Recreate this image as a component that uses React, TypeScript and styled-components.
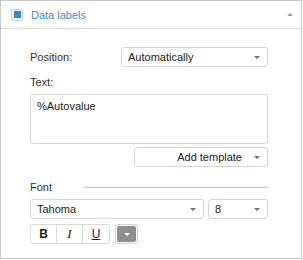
import React from "react";
import styled, { createGlobalStyle } from "styled-components";

const Global = createGlobalStyle`
  html, body { margin: 0; padding: 0; background: #fff; }
  body { font-family: "Liberation Sans", Arial, sans-serif; font-size: 11px; color: #333; }
  * { box-sizing: border-box; }
`;

const Panel = styled.div`
  width: 302px;
  height: 259px;
  border: 1px solid #c8c8c8;
  background: #fff;
  display: flex;
  flex-direction: column;
`;

const Header = styled.div`
  height: 28px;
  flex: none;
  border-bottom: 1px solid #dcdcdc;
  display: flex;
  align-items: center;
  padding: 0 0 0 10px;
`;

const Check = styled.span`
  width: 12px;
  height: 12px;
  border: 1px solid #cfcfcf;
  border-radius: 2px;
  display: flex;
  align-items: center;
  justify-content: center;
  margin-right: 8px;
`;

const CheckMark = styled.span`
  width: 7px;
  height: 7px;
  background: #2b8bd6;
`;

const Title = styled.span`
  color: #3a8ed2;
  font-size: 11px;
  flex: 1;
`;

const Collapse = styled.span`
  width: 0;
  height: 0;
  border-left: 3px solid transparent;
  border-right: 3px solid transparent;
  border-bottom: 3px solid #9a9a9a;
  margin-right: 8px;
`;

const Body = styled.div`
  padding: 18px 33px 0 29px;
  display: flex;
  flex-direction: column;
`;

const Row = styled.div<{ $mt?: number }>`
  display: flex;
  align-items: center;
  margin-top: ${(p) => p.$mt ?? 0}px;
`;

const Label = styled.div<{ $w?: number }>`
  width: ${(p) => (p.$w ? `${p.$w}px` : "auto")};
  flex: none;
  color: #333;
  line-height: 14px;
`;

const Select = styled.div<{ $w: number }>`
  width: ${(p) => p.$w}px;
  height: 20px;
  border: 1px solid #d6d6d6;
  border-radius: 3px;
  display: flex;
  align-items: center;
  padding: 0 7px 0 6px;
  color: #222;
  background: #fff;
`;

const SelectText = styled.span<{ $align?: string }>`
  flex: 1;
  text-align: ${(p) => p.$align ?? "left"};
  padding-right: ${(p) => (p.$align === "right" ? "12px" : "0")};
`;

const Arrow = styled.span<{ $color?: string }>`
  width: 0;
  height: 0;
  border-left: 3px solid transparent;
  border-right: 3px solid transparent;
  border-top: 3px solid ${(p) => p.$color ?? "#707070"};
`;

const TextArea = styled.div`
  margin-top: 5px;
  height: 50px;
  border: 1px solid #d6d6d6;
  border-radius: 3px;
  padding: 4px 6px;
  color: #222;
  line-height: 14px;
`;

const RightAlign = styled.div`
  display: flex;
  justify-content: flex-end;
  margin-top: 3px;
`;

const Line = styled.div`
  flex: 1;
  height: 1px;
  background: #c4c4c4;
`;

const Gap = styled.div<{ $w: number }>`
  width: ${(p) => p.$w}px;
  flex: none;
`;

const Group = styled.div`
  display: flex;
  height: 20px;
  border: 1px solid #dadada;
  border-radius: 3px;
  overflow: hidden;
`;

const StyleBtn = styled.div<{ $last?: boolean }>`
  width: 26px;
  height: 100%;
  display: flex;
  align-items: center;
  justify-content: center;
  border-right: ${(p) => (p.$last ? "none" : "1px solid #dadada")};
  color: #222;
  font-size: 12px;
`;

const Bold = styled.span`
  font-weight: bold;
  font-family: "Liberation Sans", Arial, sans-serif;
`;

const Ital = styled.span`
  font-style: italic;
  font-family: "Liberation Serif", "Times New Roman", serif;
  font-size: 13px;
`;

const Under = styled.span`
  text-decoration: underline;
`;

const ColorBtn = styled.div`
  width: 23px;
  height: 20px;
  margin-left: 5px;
  border: 1px solid #d0d0d0;
  border-radius: 3px;
  padding: 1px;
  display: flex;
`;

const ColorFill = styled.div`
  flex: 1;
  background: #8f8f8f;
  border-radius: 2px;
  display: flex;
  align-items: center;
  justify-content: flex-end;
  padding-right: 6px;
`;

export default function App() {
  return (
    <>
      <Global />
      <Panel>
        <Header>
          <Check>
            <CheckMark />
          </Check>
          <Title>Data labels</Title>
          <Collapse />
        </Header>
        <Body>
          <Row>
            <Label $w={91}>Position:</Label>
            <Select $w={148}>
              <SelectText>Automatically</SelectText>
              <Arrow />
            </Select>
          </Row>
          <Label style={{ marginTop: 8 }}>Text:</Label>
          <TextArea>%Autovalue</TextArea>
          <RightAlign>
            <Select $w={134}>
              <SelectText $align="right">Add template</SelectText>
              <Arrow />
            </Select>
          </RightAlign>
          <Row $mt={10} style={{ height: 20 }}>
            <Label $w={54}>Font</Label>
            <Line />
          </Row>
          <Row $mt={2}>
            <Select $w={174}>
              <SelectText>Tahoma</SelectText>
              <Arrow />
            </Select>
            <Gap $w={4} />
            <Select $w={60}>
              <SelectText>8</SelectText>
              <Arrow />
            </Select>
          </Row>
          <Row $mt={5}>
            <Group>
              <StyleBtn>
                <Bold>B</Bold>
              </StyleBtn>
              <StyleBtn>
                <Ital>I</Ital>
              </StyleBtn>
              <StyleBtn $last>
                <Under>U</Under>
              </StyleBtn>
            </Group>
            <ColorBtn>
              <ColorFill>
                <Arrow $color="#fff" />
              </ColorFill>
            </ColorBtn>
          </Row>
        </Body>
      </Panel>
    </>
  );
}
